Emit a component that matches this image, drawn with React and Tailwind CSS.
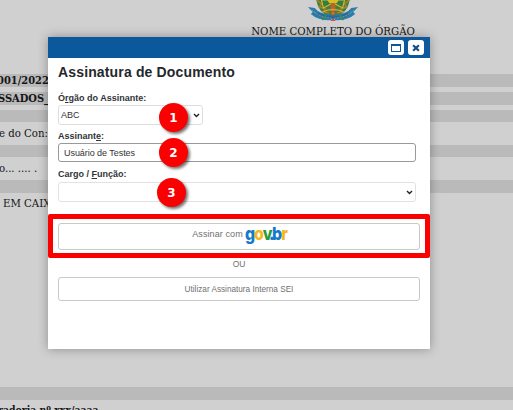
function Crest() {
  return (
    <svg className="block h-[22px] w-[52px]" viewBox="0 0 54 22" preserveAspectRatio="none">
      <path d="M9 -6 Q10 15 27 17 Q44 15 45 -6Z" fill="#4b7a3c" />
      <path d="M10 0l5 4-2 3 6 2-1 3 5 1M44 0l-5 4 2 3-6 2 1 3-5 1" fill="none" stroke="#9a8a2a" strokeWidth="1.6" />
      <path d="M15 0L17 8 27 3 37 8 39 0Z" fill="#2f7f48" stroke="#e0b526" strokeWidth="1.2" />
      <path d="M21 0h12l-2 3-4 1-4-1Z" fill="#d9bd22" />
      <path d="M25 3h4l1 8h-6Z" fill="#b7652c" />
      <path d="M16 12Q27 7 38 12" fill="none" stroke="#c8a736" strokeWidth="1.5" />
      <path d="M1 7L8 8Q14 15 25 14L25 20Q12 21 4 14L6 12Z" fill="#297cae" />
      <path d="M53 7L46 8Q40 15 29 14L29 20Q42 21 50 14L48 12Z" fill="#297cae" />
      <path d="M11 14Q27 21 43 14" fill="none" stroke="#2469a0" strokeWidth="3" />
      <path d="M5 10Q14 18 25 18M49 10Q40 18 29 18" fill="none" stroke="#b9b36a" strokeWidth=".7" strokeDasharray="2 1" />
      <path d="M16 20l4-5M38 20l-4-5" stroke="#3b8a51" strokeWidth="2" />
      <circle cx="27" cy="13" r="2" fill="#cf6636" />
      <path d="M24 21l3-3 3 3Z" fill="#b4574c" />
    </svg>
  );
}

function Chevron() {
  return (
    <svg className="h-[5px] w-[7px]" viewBox="0 0 7 5">
      <path d="M1 1l2.5 2.5L6 1" fill="none" stroke="#222" strokeWidth="1.4" />
    </svg>
  );
}

function Badge({ children, place }) {
  return (
    <span className={`absolute z-10 flex size-[29px] items-center justify-center rounded-full bg-[#fa0000] pt-px font-['DejaVu_Sans'] text-[12px] font-bold text-white shadow-[2px_2px_3px_rgba(0,0,0,0.55)] ${place}`}>
      {children}
    </span>
  );
}

const label = "flex items-center whitespace-pre text-[9px] leading-[10px] font-bold text-[#303438]";
const action = "flex w-[362px] items-center justify-center rounded-[3px] border border-[#c8c8c8] bg-white text-[#707070]";

function Dialog() {
  return (
    <section className="absolute top-[37px] left-[48px] flex h-[312px] w-[382px] flex-col bg-white font-['Liberation_Sans',sans-serif] shadow-[0_0_10px_rgba(0,0,0,0.32)]">
      <header className="flex h-[21px] shrink-0 items-center justify-end gap-[4px] bg-[#0c589c] pr-[6px]">
        <button className="flex h-[15px] w-[16px] items-center justify-center rounded-[3px] bg-white">
          <span className="h-[8px] w-[10px] border border-t-2 border-[#0c589c]" />
        </button>
        <button className="flex h-[15px] w-[16px] items-center justify-center rounded-[3px] bg-white">
          <svg className="size-[8px]" viewBox="0 0 7 7"><path d="M1 1l5 5M6 1L1 6" stroke="#174d83" strokeWidth="1.9" /></svg>
        </button>
      </header>
      <div className="flex flex-col pl-[10px]">
        <h1 className="mt-[5px] h-[18px] text-[14px] leading-[18px] font-bold tracking-[0.15px] whitespace-nowrap text-[#25282b]">Assinatura de Documento</h1>
        <label className={`${label} mt-[12px]`}>Ó<u>r</u>gão do Assinante:</label>
        <div className="relative mt-[2px] flex h-[20px] w-[145px] items-center justify-between rounded-[3px] border border-[#dedede] pt-px pr-[2px] pl-[2px] text-[9px] text-[#333]">
          ABC<Chevron />
          <Badge place="top-[-3px] left-[100px]">1</Badge>
        </div>
        <label className={`${label} mt-[6px]`}>Assinant<u>e</u>:</label>
        <div className="relative mt-[2px] flex h-[19px] w-[358px] items-center rounded-[3px] border border-[#999] pt-[2px] pl-[5px] text-[9px] tracking-[-0.05px] text-[#333]">
          Usuário de Testes
          <Badge place="top-[-6px] left-[100px]">2</Badge>
        </div>
        <label className={`${label} mt-[7px]`}>Cargo / <u>F</u>unção:</label>
        <div className="relative mt-[3px] flex h-[20px] w-[358px] items-center justify-end rounded-[3px] border border-[#e2e2e2] pr-[2px]">
          <Chevron />
          <Badge place="top-[-5px] left-[98px]">3</Badge>
        </div>
      </div>
      <div className="mt-[12px] flex h-[44px] w-[382px] items-center justify-center rounded-[2px] border-5 border-[#fa0000]">
        <button className={`${action} h-[27px] shrink-0 gap-[2px] text-[9px]`}>
          <span className="pb-[3px] tracking-[0.1px]">Assinar com</span>
          <span className="flex w-[41px] origin-left scale-x-[0.88] pb-[4px] font-['Inter'] text-[18px] leading-[20px] font-extrabold tracking-[-1.2px]">
            <span className="text-[#1479cc]">g</span><span className="text-[#f9b51c]">o</span><span className="text-[#269b39]">v</span><span className="-mr-[1.5px] -ml-[3px] text-[#1479cc]">.</span><span className="text-[#1479cc]">b</span><span className="text-[#f9b51c]">r</span>
          </span>
        </button>
      </div>
      <p className="mt-[1px] text-center text-[8.5px] leading-[10px] text-[#707070]">OU</p>
      <button className={`${action} mt-[8px] ml-[10px] h-[24px] pt-[2px] text-[8.2px]`}>Utilizar Assinatura Interna SEI</button>
    </section>
  );
}

export default function App() {
  return (
    <main className="relative flex h-[410px] w-[513px] flex-col overflow-hidden bg-[#d0d0d0] font-['DejaVu_Serif_Condensed','DejaVu_Serif',serif] text-[11px] whitespace-nowrap text-[#151515]">
      <div className="ml-[153px] flex h-[74px] shrink-0 flex-col items-center">
        <Crest />
        <p className="mt-[3px] text-[11.3px] leading-[14px]">NOME COMPLETO DO ÓRGÃO</p>
      </div>
      <div className="flex h-[13px] shrink-0 items-center bg-[#bababa] pt-px font-bold"><span className="-ml-[3px]">001/2022</span></div>
      <div className="mt-[5px] flex h-[13px] shrink-0 items-center bg-[#bababa] pt-px font-bold"><span className="-ml-[2px]">SSADOS_</span></div>
      <div className="mt-[5px] h-[12px] shrink-0 bg-[#bababa]" />
      <p className="-ml-[1px] h-[23px] shrink-0 text-[11.3px] leading-[24px]">e do Con:</p>
      <div className="h-[12px] shrink-0 bg-[#bababa]" />
      <p className="-ml-[1px] h-[23px] shrink-0 text-[11.3px] leading-[24px]">o... .... .</p>
      <div className="h-[13px] shrink-0 bg-[#bababa]" />
      <p className="ml-[3px] h-[194px] shrink-0 text-[11.3px] leading-[22px]">EM CAIXA</p>
      <div className="h-[13px] shrink-0 bg-[#bababa]" />
      <p className="-ml-[2px] mt-[3px] shrink-0 text-[10.4px] leading-[14px] font-bold">radoria nº xxx/aaaa</p>
      <Dialog />
    </main>
  );
}
